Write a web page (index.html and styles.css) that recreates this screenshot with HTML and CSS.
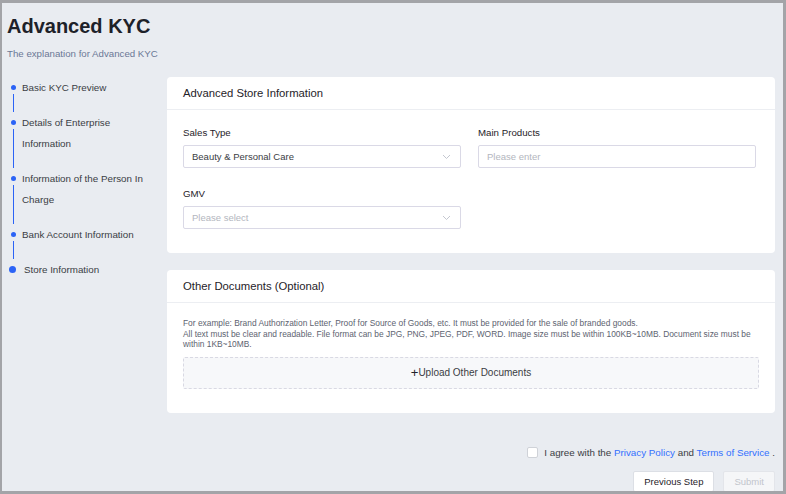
FILE: index.html
```html
<!DOCTYPE html>
<html lang="en">
<head>
    <meta charset="UTF-8">
    <meta name="viewport" content="width=device-width, initial-scale=1.0">
    <title>Advanced KYC</title>
    <link rel="stylesheet" href="styles.css">
</head>
<body>

<div class="frame">
    <h1 class="title">Advanced KYC</h1>
    <p class="subtitle">The explanation for Advanced KYC</p>

    <div class="layout">
        <!-- Adimlar -->
        <ul class="steps">
            <li class="step">
                <div class="step-mark"><span class="dot"></span><span class="line"></span></div>
                <div class="step-text">Basic KYC Preview</div>
            </li>
            <li class="step">
                <div class="step-mark"><span class="dot"></span><span class="line"></span></div>
                <div class="step-text">Details of Enterprise<br>Information</div>
            </li>
            <li class="step">
                <div class="step-mark"><span class="dot"></span><span class="line"></span></div>
                <div class="step-text">Information of the Person In<br>Charge</div>
            </li>
            <li class="step">
                <div class="step-mark"><span class="dot"></span><span class="line"></span></div>
                <div class="step-text">Bank Account Information</div>
            </li>
            <li class="step current">
                <div class="step-mark"><span class="dot"></span></div>
                <div class="step-text">Store Information</div>
            </li>
        </ul>

        <div class="content">
            <div class="card">
                <div class="card-header">Advanced Store Information</div>
                <div class="card-body form-grid">
                    <div class="field">
                        <label>Sales Type</label>
                        <div class="input select">
                            <span>Beauty &amp; Personal Care</span>
                            <svg class="chevron" width="9" height="6" viewBox="0 0 9 6"><path d="M1 1l3.5 3.5L8 1" fill="none" stroke="#c4c7d0" stroke-width="1"/></svg>
                        </div>
                    </div>
                    <div class="field">
                        <label>Main Products</label>
                        <div class="input"><span class="placeholder">Please enter</span></div>
                    </div>
                    <div class="field">
                        <label>GMV</label>
                        <div class="input select">
                            <span class="placeholder">Please select</span>
                            <svg class="chevron" width="9" height="6" viewBox="0 0 9 6"><path d="M1 1l3.5 3.5L8 1" fill="none" stroke="#c4c7d0" stroke-width="1"/></svg>
                        </div>
                    </div>
                </div>
            </div>

            <div class="card">
                <div class="card-header">Other Documents (Optional)</div>
                <div class="card-body docs">
                    <p class="hint">For example: Brand Authorization Letter, Proof for Source of Goods, etc. It must be provided for the sale of branded goods.<br>All text must be clear and readable. File format can be JPG, PNG, JPEG, PDF, WORD. Image size must be within 100KB~10MB. Document size must be within 1KB~10MB.</p>
                    <div class="upload"><span class="plus">+</span>Upload Other Documents</div>
                </div>
            </div>

            <div class="agree">
                <span class="checkbox"></span>
                <span>I agree with the <a href="#">Privacy Policy</a> and <a href="#">Terms of Service</a> .</span>
            </div>

            <div class="actions">
                <button class="btn">Previous Step</button>
                <button class="btn disabled">Submit</button>
            </div>
        </div>
    </div>
</div>

</body>
</html>
```

FILE: styles.css
```css
* {
    box-sizing: border-box;
}

body {
    margin: 0;
    font-family: "Liberation Sans", Arial, sans-serif;
    background-color: #a3a4a8;
}

.frame {
    width: 786px;
    height: 494px;
    border-style: solid;
    border-color: #a3a4a8;
    border-width: 3px 3px 3px 2px;
    background-color: #e9ecf1;
    padding: 0 8px 0 5px;
    overflow: hidden;
}

.title {
    margin: 10px 0 0;
    font-size: 20px;
    line-height: 26px;
    font-weight: bold;
    color: #1d2129;
}

.subtitle {
    margin: 9px 0 0;
    font-size: 9.7px;
    line-height: 12px;
    color: #6b7896;
}

.layout {
    display: flex;
    margin-top: 17px;
}

/* Adimlar */
.steps {
    list-style: none;
    margin: 0;
    padding: 0;
    width: 160px;
    flex-shrink: 0;
}

.step {
    display: flex;
}

.step-mark {
    width: 15px;
    display: flex;
    flex-direction: column;
    align-items: center;
    margin-left: -1px;
}

.dot {
    width: 5px;
    height: 5px;
    border-radius: 50%;
    background-color: #2b63f6;
    margin-top: 8px;
}

.line {
    flex: 1;
    width: 1px;
    background-color: #2b63f6;
    margin-top: 4px;
}

.step-text {
    font-size: 9.8px;
    line-height: 21px;
    color: #3a3d44;
    padding-bottom: 14px;
    padding-left: 1px;
}

.step.current .dot {
    width: 7px;
    height: 7px;
    margin-top: 7px;
    margin-left: -2px;
}

.step.current .step-text {
    padding-left: 3px;
    padding-bottom: 0;
}

.content {
    flex: 1;
}

.card {
    background-color: #fff;
    border-radius: 4px;
    margin-bottom: 17px;
}

.card-header {
    height: 33px;
    padding: 0 16px;
    line-height: 32px;
    font-size: 11.3px;
    color: #1f2329;
    border-bottom: 1px solid #eceef2;
}

.card-body {
    padding: 17px 16px 24px;
}

.form-grid {
    display: grid;
    grid-template-columns: 278px 278px;
    column-gap: 17px;
    row-gap: 20px;
}

.field label {
    display: block;
    font-size: 9.7px;
    line-height: 12px;
    color: #1f2329;
    margin-bottom: 6px;
}

.input {
    height: 23px;
    border: 1px solid #dad9e6;
    border-radius: 2px;
    padding: 0 8px;
    display: flex;
    align-items: center;
    justify-content: space-between;
    font-size: 9.5px;
    color: #3a3d44;
}

.placeholder {
    color: #b3b6be;
}

.chevron {
    margin-right: 1px;
}

.docs {
    padding: 15px 16px 24px;
}

.hint {
    margin: 0;
    font-size: 8.4px;
    line-height: 10.5px;
    color: #5d6370;
}

.upload {
    margin-top: 7px;
    height: 32px;
    border: 1px dashed #d9d9e3;
    border-radius: 2px;
    background-color: #f7f8fa;
    display: flex;
    align-items: center;
    justify-content: center;
    font-size: 10px;
    color: #3a3d44;
}

.plus {
    font-size: 13px;
    font-weight: 300;
    color: #1f2329;
    margin-top: -1px;
}

.agree {
    display: flex;
    justify-content: flex-end;
    align-items: center;
    gap: 6px;
    margin-top: 34px;
    font-size: 9.8px;
    color: #3a3d44;
}

.agree a {
    color: #3370ff;
    text-decoration: none;
}

.checkbox {
    width: 11px;
    height: 11px;
    border: 1px solid #cfd2d8;
    border-radius: 2px;
    background-color: #fff;
}

.actions {
    display: flex;
    justify-content: flex-end;
    gap: 9px;
    margin-top: 13px;
}

.btn {
    height: 21px;
    padding: 0 10px;
    font-family: inherit;
    font-size: 9.5px;
    color: #1f2329;
    background-color: #fff;
    border: 1px solid #dcdfe5;
    border-radius: 2px;
}

.btn.disabled {
    color: #c2c5cc;
    background-color: #f5f6f8;
    border-color: #e3e5ea;
}
```
